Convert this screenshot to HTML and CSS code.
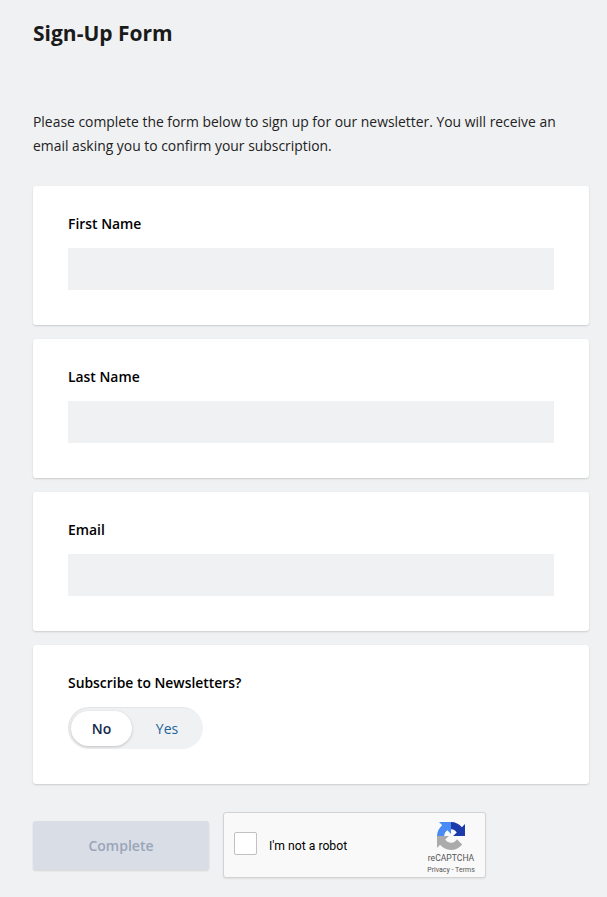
FILE: index.html
```html
<!DOCTYPE html>
<html lang="en">
<head>
    <meta charset="UTF-8">
    <meta name="viewport" content="width=device-width, initial-scale=1.0">
    <title>Sign-Up Form</title>
    <link rel="stylesheet" href="styles.css">
</head>
<body>
    <div class="page">
        <h1>Sign-Up Form</h1>
        <p class="intro">Please complete the form below to sign up for our newsletter. You will receive an email asking you to confirm your subscription.</p>

        <form class="signup-form" onsubmit="return false">
            <!-- Text fields -->
            <div class="card">
                <label class="field-label" for="firstName">First Name</label>
                <input class="field-input" id="firstName" type="text">
            </div>
            <div class="card">
                <label class="field-label" for="lastName">Last Name</label>
                <input class="field-input" id="lastName" type="text">
            </div>
            <div class="card">
                <label class="field-label" for="email">Email</label>
                <input class="field-input" id="email" type="email">
            </div>

            <!-- Newsletter toggle -->
            <div class="card">
                <div class="field-label">Subscribe to Newsletters?</div>
                <div class="toggle">
                    <span class="toggle-option active">No</span>
                    <span class="toggle-option">Yes</span>
                </div>
            </div>

            <div class="form-footer">
                <button class="complete-btn" type="submit" disabled>Complete</button>

                <div class="captcha">
                    <span class="captcha-box"></span>
                    <span class="captcha-text">I'm not a robot</span>
                    <div class="captcha-brand">
                        <svg class="captcha-logo" viewBox="0 0 64 64" width="28" height="28">
                            <defs>
                                <clipPath id="topHalf"><rect x="0" y="0" width="64" height="32"/></clipPath>
                                <clipPath id="rightHalf"><rect x="32" y="0" width="32" height="64"/></clipPath>
                                <path id="captchaArrow" d="M64 32l-.03-1.4V4.7l-7.16 7.16C50.95 4.67 42.03.09 32.05.09 21.65.09 12.43 5.05 6.59 12.73l11.74 11.86a15.55 15.55 0 0 1 4.75-5.33c2.05-1.6 4.95-2.91 8.97-2.91.49 0 .86.07 1.14.2 5.02.4 9.37 3.17 11.93 7.19L36.8 32c10.5-.04 17.4-.07 27.2 0z"/>
                            </defs>
                            <use href="#captchaArrow" fill="#ababab" transform="rotate(180 32 32)"/>
                            <g clip-path="url(#topHalf)">
                                <use href="#captchaArrow" fill="#4a8af4" transform="rotate(-90 32 32)"/>
                            </g>
                            <g clip-path="url(#rightHalf)">
                                <use href="#captchaArrow" fill="#1c3aa9"/>
                            </g>
                        </svg>
                        <div class="captcha-name">reCAPTCHA</div>
                        <div class="captcha-links">Privacy - Terms</div>
                    </div>
                </div>
            </div>
        </form>
    </div>
</body>
</html>
```

FILE: styles.css
```css
/* General Styles */
body {
    font-family: 'Open Sans', Arial, sans-serif;
    margin: 0;
    padding: 0;
    background: #f0f1f3;
    color: #1a1a1a;
}

.page {
    padding: 18px 18px 19px 33px;
}

h1 {
    font-size: 21px;
    line-height: 30px;
    font-weight: 700;
    margin: 0 0 62px;
    color: #1a1a1a;
}

.intro {
    font-size: 13.9px;
    line-height: 24px;
    margin: 0 0 28px;
    color: #222;
}

/* Cards */
.card {
    background: #fff;
    border-radius: 3px;
    box-shadow: 0 1px 2px rgba(0, 0, 0, 0.16);
    padding: 28px 35px 35px;
    margin-bottom: 14px;
    height: 139px;
    box-sizing: border-box;
}

.field-label {
    display: block;
    font-size: 13.9px;
    line-height: 20px;
    font-weight: 600;
    color: #000;
    margin-bottom: 14px;
}

.field-input {
    display: block;
    width: 100%;
    height: 42px;
    box-sizing: border-box;
    border: none;
    background: #f0f1f3;
    outline: none;
}

/* Toggle */
.toggle {
    display: inline-flex;
    align-items: center;
    width: 135px;
    height: 42px;
    box-sizing: border-box;
    padding: 0 3px;
    border-radius: 21px;
    background: #f0f1f3;
    box-shadow: inset 1px 1px 1px rgba(0, 0, 0, 0.05);
    font-size: 14px;
}

.toggle-option {
    flex: 1;
    height: 35px;
    line-height: 35px;
    text-align: center;
    padding-left: 2px;
    color: #1d6499;
}

.toggle-option.active {
    flex: 0 0 61px;
    padding-left: 0;
    font-weight: 600;
    color: #13294b;
    background: #fff;
    border-radius: 18px;
    box-shadow: 0 1px 3px rgba(0, 0, 0, 0.2);
}

/* Footer row */
.form-footer {
    display: flex;
    align-items: center;
    gap: 14px;
    margin-top: 28px;
}

.complete-btn {
    width: 176px;
    height: 49px;
    border: none;
    border-radius: 3px;
    background: #d9dde5;
    box-shadow: 0 1px 2px rgba(0, 0, 0, 0.12);
    color: #9aa5b8;
    font-family: inherit;
    font-size: 14px;
    font-weight: 600;
}

/* reCAPTCHA */
.captcha {
    display: flex;
    align-items: center;
    width: 263px;
    height: 66px;
    box-sizing: border-box;
    background: #f9f9f9;
    border: 1px solid #d3d3d3;
    border-radius: 3px;
    box-shadow: 0 1px 2px rgba(0, 0, 0, 0.08);
    padding: 0 9px 0 10px;
    font-family: 'Roboto', Arial, sans-serif;
}

.captcha-box {
    width: 23px;
    height: 23px;
    box-sizing: border-box;
    background: #fff;
    border: 1px solid #c1c1c1;
    border-radius: 2px;
    margin: 0 12px 3px 0;
}

.captcha-text {
    flex: 1;
    margin-top: 1px;
    font-size: 12.2px;
    color: #000;
}

.captcha-brand {
    align-self: flex-start;
    width: 50px;
    text-align: center;
    color: #555;
}

.captcha-logo {
    display: block;
    margin: 9px auto 3px;
}

.captcha-name {
    font-size: 8.6px;
    line-height: 11px;
}

.captcha-links {
    font-size: 7px;
    line-height: 10px;
    margin-top: 1px;
}
```
